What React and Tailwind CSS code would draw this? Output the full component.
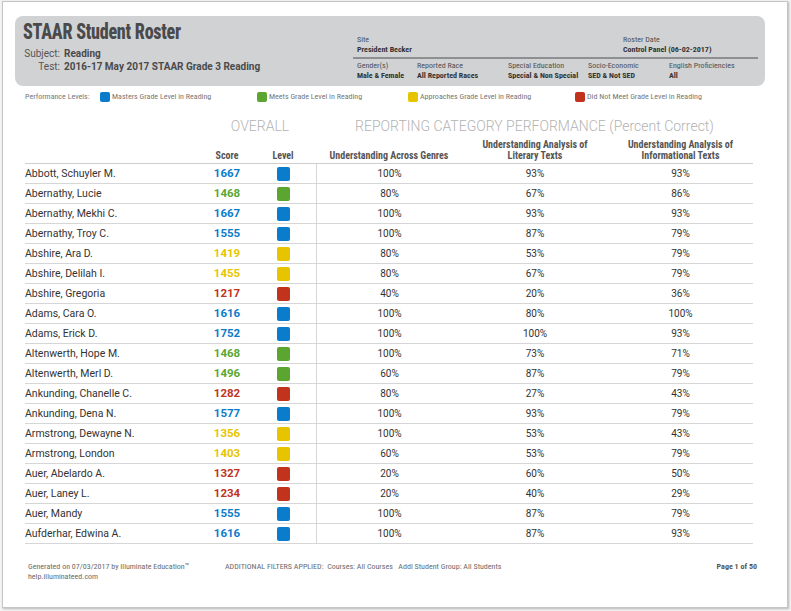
import React from 'react'

const cond = "font-['Roboto_Condensed','Liberation_Sans_Narrow','DejaVu_Sans_Condensed',Roboto,sans-serif]"

const LEVELS = {
  blue: { text: 'text-[#0b7bcb]', bg: 'bg-[#0b7bcb]' },
  green: { text: 'text-[#5aa630]', bg: 'bg-[#5aa630]' },
  yellow: { text: 'text-[#e6c500]', bg: 'bg-[#e6c500]' },
  red: { text: 'text-[#c1331c]', bg: 'bg-[#c1331c]' },
}

const students = [
  ['Abbott, Schuyler M.', 1667, 'blue', '100%', '93%', '93%'],
  ['Abernathy, Lucie', 1468, 'green', '80%', '67%', '86%'],
  ['Abernathy, Mekhi C.', 1667, 'blue', '100%', '93%', '93%'],
  ['Abernathy, Troy C.', 1555, 'blue', '100%', '87%', '79%'],
  ['Abshire, Ara D.', 1419, 'yellow', '80%', '53%', '79%'],
  ['Abshire, Delilah I.', 1455, 'yellow', '80%', '67%', '79%'],
  ['Abshire, Gregoria', 1217, 'red', '40%', '20%', '36%'],
  ['Adams, Cara O.', 1616, 'blue', '100%', '80%', '100%'],
  ['Adams, Erick D.', 1752, 'blue', '100%', '100%', '93%'],
  ['Altenwerth, Hope M.', 1468, 'green', '100%', '73%', '71%'],
  ['Altenwerth, Merl D.', 1496, 'green', '60%', '87%', '79%'],
  ['Ankunding, Chanelle C.', 1282, 'red', '80%', '27%', '43%'],
  ['Ankunding, Dena N.', 1577, 'blue', '100%', '93%', '79%'],
  ['Armstrong, Dewayne N.', 1356, 'yellow', '100%', '53%', '43%'],
  ['Armstrong, London', 1403, 'yellow', '60%', '53%', '79%'],
  ['Auer, Abelardo A.', 1327, 'red', '20%', '60%', '50%'],
  ['Auer, Laney L.', 1234, 'red', '20%', '40%', '29%'],
  ['Auer, Mandy', 1555, 'blue', '100%', '87%', '79%'],
  ['Aufderhar, Edwina A.', 1616, 'blue', '100%', '87%', '93%'],
]

const filters = [
  ['Gender(s)', 'Male & Female', 'w-[60px]'],
  ['Reported Race', 'All Reported Races', 'w-[91px]'],
  ['Special Education', 'Special & Non Special', 'w-[80px]'],
  ['Socio-Economic', 'SED & Not SED', 'w-[81px]'],
  ['English Proficiencies', 'All', 'w-[88px]'],
]

const legend = [
  ['blue', 'Masters Grade Level in Reading', 'w-[157px]'],
  ['green', 'Meets Grade Level in Reading', 'w-[151px]'],
  ['yellow', 'Approaches Grade Level in Reading', 'w-[167px]'],
  ['red', 'Did Not Meet Grade Level in Reading', 'w-[160px]'],
]

function Header() {
  return (
    <div className="ml-[12px] mt-[14px] w-[750px] h-[70px] rounded-[8px] bg-[#d1d2d4] flex">
      <div className="w-[338px] pl-[8px] pt-[2px]">
        <div className={`${cond} inline-block origin-left scale-x-[0.82] font-extrabold text-[22px] leading-[28px] tracking-[-0.3px] text-[#4a4a4a] whitespace-nowrap`}>
          STAAR Student Roster
        </div>
        <div className="font-['Roboto',sans-serif] text-[10px] leading-[13px] text-[#555] mt-[1px]">
          <div className="flex">
            <span className="w-[37px] text-right">Subject:</span>
            <span className="ml-[4px] font-bold text-[#4a4a4a]">Reading</span>
          </div>
          <div className="flex">
            <span className="w-[37px] text-right">Test:</span>
            <span className="ml-[4px] font-bold text-[#4a4a4a]">2016-17 May 2017 STAAR Grade 3 Reading</span>
          </div>
        </div>
      </div>
      <div className={`${cond} w-[405px] pt-[19px] text-[8px] leading-[10px] text-[#4f4f4f]`}>
        <div className="flex pl-[4px] pb-[2px]">
          <div className="w-[266px]">
            <div>Site</div>
            <div className="font-bold text-[#333]">President Becker</div>
          </div>
          <div>
            <div>Roster Date</div>
            <div className="font-bold text-[#333]">Control Panel (06-02-2017)</div>
          </div>
        </div>
        <div className="h-[2px] bg-[#8e8f91]" />
        <div className="flex pl-[4px] pt-[2px]">
          {filters.map(([label, value, w]) => (
            <div key={label} className={w}>
              <div>{label}</div>
              <div className="font-bold text-[#333] whitespace-nowrap">{value}</div>
            </div>
          ))}
        </div>
      </div>
    </div>
  )
}

function Legend() {
  return (
    <div className={`${cond} mt-[5px] ml-[22px] h-[12px] flex items-center text-[8px] text-[#777]`}>
      <span className="w-[75px]">Performance Levels:</span>
      {legend.map(([lvl, label, w]) => (
        <div key={lvl} className={`${w} flex items-center`}>
          <span className={`w-[10px] h-[10px] rounded-[2px] ${LEVELS[lvl].bg}`} />
          <span className="ml-[2px] whitespace-nowrap">{label}</span>
        </div>
      ))}
    </div>
  )
}

const grid = 'grid grid-cols-[179px_46px_66px_146px_146px_145px]'

function Table() {
  return (
    <div className="ml-[22px] w-[728px]">
      <div className={`${grid} mt-[13px] h-[16px] items-center font-['Roboto',sans-serif] font-light text-[14px] text-[#b3b3b3]`}>
        <div />
        <div className="col-span-2 text-center">OVERALL</div>
        <div className="col-span-3 text-center whitespace-nowrap">REPORTING CATEGORY PERFORMANCE (Percent Correct)</div>
      </div>
      <div className={`${grid} ${cond} mt-[6px] h-[26px] items-end pb-[2px] border-b border-[#cfcfcf] text-[10px] leading-[11px] font-bold text-[#555] text-center`}>
        <div />
        <div>Score</div>
        <div>Level</div>
        <div>Understanding Across Genres</div>
        <div>Understanding Analysis of<br />Literary Texts</div>
        <div>Understanding Analysis of<br />Informational Texts</div>
      </div>
      {students.map(([name, score, lvl, a, b, c]) => (
        <div key={name} className={`${grid} h-[20px] items-center border-b border-[#d6d6d6] font-['Roboto',sans-serif] text-[#333]`}>
          <div className="text-[10.5px]">{name}</div>
          <div className={`text-center text-[11.5px] font-bold ${LEVELS[lvl].text}`}>{score}</div>
          <div className="flex justify-center">
            <span className={`w-[13px] h-[14px] rounded-[2px] ${LEVELS[lvl].bg}`} />
          </div>
          <div className="h-full flex items-center justify-center border-l border-[#d6d6d6] text-[10px]">{a}</div>
          <div className="text-center text-[10px]">{b}</div>
          <div className="text-center text-[10px]">{c}</div>
        </div>
      ))}
    </div>
  )
}

function Footer() {
  return (
    <div className={`${cond} mt-[18px] ml-[25px] w-[729px] flex text-[8px] leading-[10px] text-[#6b6b6b]`}>
      <div className="w-[197px]">
        <div>Generated on 07/03/2017 by Illuminate Education™</div>
        <div>help.illuminateed.com</div>
      </div>
      <div className="flex-1 whitespace-pre">
        ADDITIONAL FILTERS APPLIED:  Courses: All Courses   Addl Student Group: All Students
      </div>
      <div className="font-bold text-[#555]">Page 1 of 50</div>
    </div>
  )
}

export default function App() {
  return (
    <div className="w-[791px] h-[611px] bg-[#f3f3f3] pl-[2px] pt-[1px]">
      <div className="w-[786px] h-[607px] bg-white border border-[#c4c4c4] shadow-[1px_1px_2px_rgba(0,0,0,0.25)]">
        <Header />
        <Legend />
        <Table />
        <Footer />
      </div>
    </div>
  )
}
